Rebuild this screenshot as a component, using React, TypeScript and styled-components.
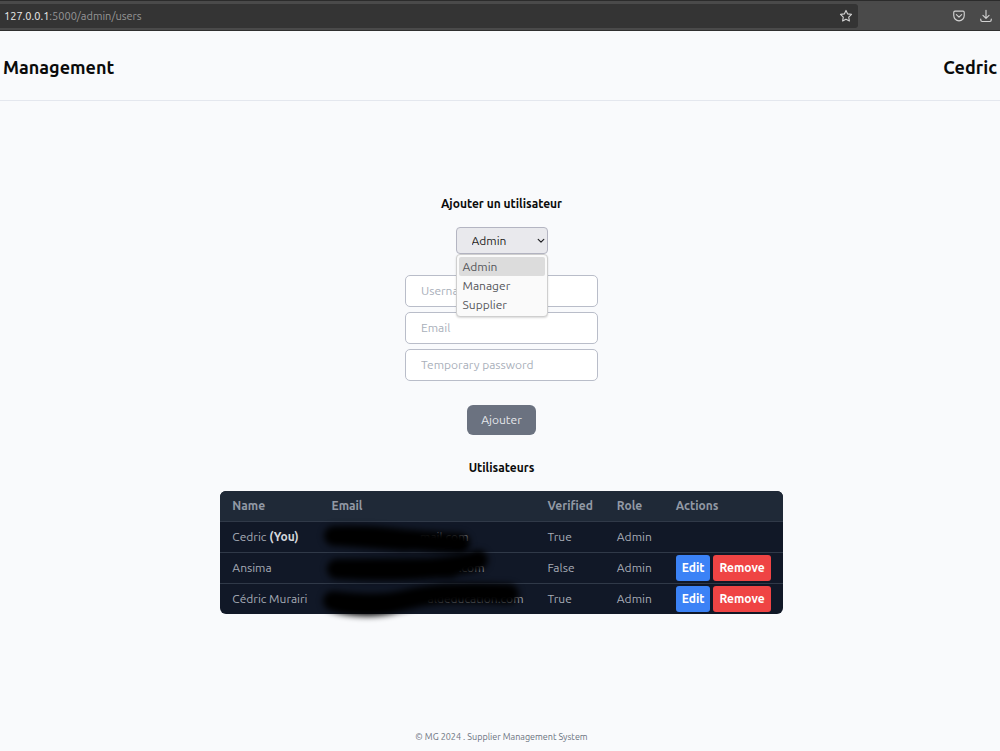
import React, { useState } from 'react';
import styled, { createGlobalStyle } from 'styled-components';

const roles = ['Admin', 'Manager', 'Supplier'];

const fields = [
  { id: 'username', label: 'Username', type: 'text' },
  { id: 'email', label: 'Email', type: 'email' },
  { id: 'password', label: 'Temporary password', type: 'password' },
];

const users = [
  {
    name: 'Cedric',
    you: true,
    email: 'mail.com',
    emailWidth: 137,
    verified: 'True',
    mask: 'M19 17 Q50 16 76 19 T145 24',
    maskEnd: 'M24 17 L92 22',
  },
  {
    name: 'Ansima',
    email: '.com',
    emailWidth: 153,
    verified: 'False',
    mask: 'M22 19 Q80 22 118 18 T163 10',
    maskEnd: 'M22 19 L136 18',
  },
  {
    name: 'Cédric Murairi',
    email: 'aldeducation.com',
    emailWidth: 192,
    verified: 'True',
    mask: 'M18 20 Q64 26 94 18 T194 13',
    maskEnd: 'M24 22 Q60 29 84 20',
  },
];

const App = () => {
  const [role, setRole] = useState('Admin');

  return (
    <>
      <GlobalStyle />
      <BrowserBar>
        <AddressBar>
          <Url>
            <b>127.0.0.1</b>:5000/admin/users
          </Url>
          <ToolButton aria-label='Bookmark'>
            <svg width='14' height='14' viewBox='0 0 16 16'>
              <path d='M8 1.6l1.9 4 4.4.6-3.2 3.1.8 4.4L8 11.6l-3.9 2.1.8-4.4L1.7 6.2l4.4-.6z' />
            </svg>
          </ToolButton>
        </AddressBar>
        <Tools>
          <ToolButton aria-label='Pocket'>
            <svg width='14' height='14' viewBox='0 0 16 16'>
              <path d='M3.4 2.5h9.2c.8 0 1.4.6 1.4 1.4v3.6a6 6 0 0 1-12 0V3.9c0-.8.6-1.4 1.4-1.4z' />
              <path d='M5 6.4l3 2.8 3-2.8' />
            </svg>
          </ToolButton>
          <ToolButton aria-label='Downloads'>
            <svg width='14' height='14' viewBox='0 0 16 16'>
              <path d='M8 1.5v9M4.5 7.2L8 10.7l3.5-3.5M2 11.5v1.2c0 .9.7 1.6 1.6 1.6h8.8c.9 0 1.6-.7 1.6-1.6v-1.2' />
            </svg>
          </ToolButton>
        </Tools>
      </BrowserBar>

      <Header>
        <Brand>Management</Brand>
        <Brand as='span'>Cedric</Brand>
      </Header>

      <Main>
        <Title>Ajouter un utilisateur</Title>
        <Form onSubmit={e => e.preventDefault()}>
          <Dropdown>
            <Select aria-label='Role' value={role} onChange={e => setRole(e.target.value)}>
              {roles.map(r => (
                <option key={r}>{r}</option>
              ))}
            </Select>
            <Chevron width='8' height='6' viewBox='0 0 8 6'>
              <path d='M1.2 1.4l2.8 2.8 2.8-2.8' />
            </Chevron>
            <Menu role='listbox' aria-label='Roles'>
              {roles.map(r => (
                <MenuItem
                  key={r}
                  role='option'
                  aria-selected={r === role}
                  $active={r === role}
                  onClick={() => setRole(r)}>
                  {r}
                </MenuItem>
              ))}
            </Menu>
          </Dropdown>
          <Fields>
            {fields.map(f => (
              <Input key={f.id} id={f.id} type={f.type} placeholder={f.label} aria-label={f.label} />
            ))}
          </Fields>
          <SubmitButton type='submit'>Ajouter</SubmitButton>
        </Form>

        <Title>Utilisateurs</Title>
        <Table>
          <thead>
            <tr>
              <th>Name</th>
              <th>Email</th>
              <th>Verified</th>
              <th>Role</th>
              <th>Actions</th>
            </tr>
          </thead>
          <tbody>
            {users.map(u => (
              <tr key={u.name}>
                <td>
                  {u.name} {u.you && <b>(You)</b>}
                </td>
                <td>
                  <Email $width={u.emailWidth}>
                    {u.email}
                    <Mask width='220' height='44' viewBox='-8 -4 220 44'>
                      <path d={u.mask} />
                      <path d={u.maskEnd} />
                    </Mask>
                  </Email>
                </td>
                <td>{u.verified}</td>
                <td>Admin</td>
                <td>
                  {!u.you && (
                    <Actions>
                      <ActionButton $color='#3b82f6'>Edit</ActionButton>
                      <ActionButton $color='#ef4444'>Remove</ActionButton>
                    </Actions>
                  )}
                </td>
              </tr>
            ))}
          </tbody>
        </Table>
      </Main>

      <Footer>© MG 2024 . Supplier Management System</Footer>
    </>
  );
};

export default App;

const GlobalStyle = createGlobalStyle`
  * {
    box-sizing: border-box;
  }

  body {
    margin: 0;
    background: #f9fafc;
    color: #0a0a0a;
    font-family: Ubuntu, 'Open Sans', 'Noto Sans', sans-serif;
    font-size: 12px;
    line-height: 18px;
  }

  #root {
    min-height: 100vh;
    display: flex;
    flex-direction: column;
  }

  button,
  input,
  select {
    font: inherit;
  }
`;

//  BROWSER BAR
const BrowserBar = styled.div`
  height: 31px;
  padding-top: 1px;
  display: flex;
  align-items: center;
  background: #4a4a4a;
  border-top: 1px solid #2b2b2b;
  border-bottom: 1px solid #2f2f2f;
`;

const AddressBar = styled.div`
  height: 24px;
  padding: 0 5px 0 4px;
  flex: 1;
  display: flex;
  align-items: center;
  justify-content: space-between;
  background: #343434;
  border-radius: 0 3px 3px 0;
`;

const Url = styled.span`
  font-size: 11px;
  color: #969696;
  b {
    font-weight: 400;
    color: #ececec;
  }
`;

const Tools = styled.div`
  width: 142px;
  padding-right: 7px;
  display: flex;
  justify-content: flex-end;
  gap: 13px;
`;

const ToolButton = styled.button`
  padding: 0;
  display: flex;
  background: none;
  border: none;
  svg {
    fill: none;
    stroke: #d2d2d2;
    stroke-width: 1.3;
    stroke-linecap: round;
    stroke-linejoin: round;
  }
`;

//  HEADER
const Header = styled.header`
  height: 70px;
  padding: 2px 3px 0;
  display: flex;
  align-items: center;
  justify-content: space-between;
  border-bottom: 1px solid #e4e7ee;
`;

const Brand = styled.h1`
  margin: 0;
  font-size: 18px;
  line-height: 24px;
  font-weight: 600;
`;

//  CONTENT
const Main = styled.main`
  padding: 94px 0 0 3px;
  flex: 1;
  display: flex;
  flex-direction: column;
  align-items: center;
`;

const Title = styled.h2`
  margin: 0 0 14px;
  font-size: 12px;
  line-height: 18px;
  font-weight: 600;
`;

const Form = styled.form`
  margin-bottom: 24px;
  display: flex;
  flex-direction: column;
  align-items: center;
`;

const Dropdown = styled.div`
  margin-bottom: 21px;
  position: relative;
`;

const Select = styled.select`
  width: 92px;
  height: 27px;
  padding: 0 15px;
  display: block;
  appearance: none;
  color: #1f1f23;
  background: #e9e9ed;
  border: 1px solid #b4b5c2;
  border-radius: 4px;
`;

const Chevron = styled.svg`
  position: absolute;
  top: 11px;
  right: 3px;
  fill: none;
  stroke: #1f1f23;
  stroke-width: 1.2;
  stroke-linecap: round;
  stroke-linejoin: round;
  pointer-events: none;
`;

const Menu = styled.ul`
  width: 100%;
  margin: 0;
  padding: 2px;
  position: absolute;
  top: 100%;
  left: 0;
  z-index: 10;
  list-style: none;
  line-height: 17px;
  color: #55565a;
  background: #fafafa;
  border: 1px solid #cfcfcf;
  border-radius: 4px;
  box-shadow: 0 1px 2px rgba(0, 0, 0, 0.15);
`;

const MenuItem = styled.li<{ $active: boolean }>`
  padding: 1px 4px;
  border-radius: 2px;
  background: ${p => (p.$active ? '#dcdcdc' : 'transparent')};
  cursor: default;
`;

const Fields = styled.div`
  margin-bottom: 24px;
  display: flex;
  flex-direction: column;
  gap: 5px;
`;

const Input = styled.input`
  width: 193px;
  height: 32px;
  padding: 0 15px 1px;
  background: white;
  border: 1px solid #b9bdc9;
  border-radius: 5px;
  &::placeholder {
    color: #a9afba;
    opacity: 1;
  }
`;

const SubmitButton = styled.button`
  height: 30px;
  padding: 0 14px;
  color: #e5e7eb;
  background: #6b7280;
  border: none;
  border-radius: 6px;
`;

//  USERS TABLE
const Table = styled.table`
  border-spacing: 0;
  color: #a7acb6;
  background: #111827;
  border-radius: 6px;

  th,
  td {
    height: 31px;
    padding: 0 12px;
    text-align: left;
    white-space: nowrap;
  }
  th {
    height: 30px;
    color: #9299a5;
    background: #1f2937;
    font-weight: 600;
    &:first-child {
      border-top-left-radius: 6px;
    }
    &:last-child {
      border-top-right-radius: 6px;
    }
  }
  td {
    border-top: 1px solid #303948;
    b {
      color: #d4d7dc;
      font-weight: 600;
    }
  }
`;

const Email = styled.div<{ $width: number }>`
  width: ${p => p.$width}px;
  position: relative;
  text-align: right;
`;

const Mask = styled.svg`
  position: absolute;
  top: -13px;
  left: -25px;
  overflow: visible;
  fill: none;
  stroke: black;
  stroke-width: 20;
  stroke-linecap: round;
  filter: blur(3px);
  pointer-events: none;
`;

const Actions = styled.div`
  display: flex;
  gap: 3px;
`;

const ActionButton = styled.button<{ $color: string }>`
  height: 26px;
  padding: 0 6px;
  color: white;
  background: ${p => p.$color};
  border: none;
  border-radius: 3px;
  font-weight: 600;
`;

//  FOOTER
const Footer = styled.footer`
  padding: 0 0 5px 3px;
  color: #6b7280;
  font-size: 9px;
  text-align: center;
`;
